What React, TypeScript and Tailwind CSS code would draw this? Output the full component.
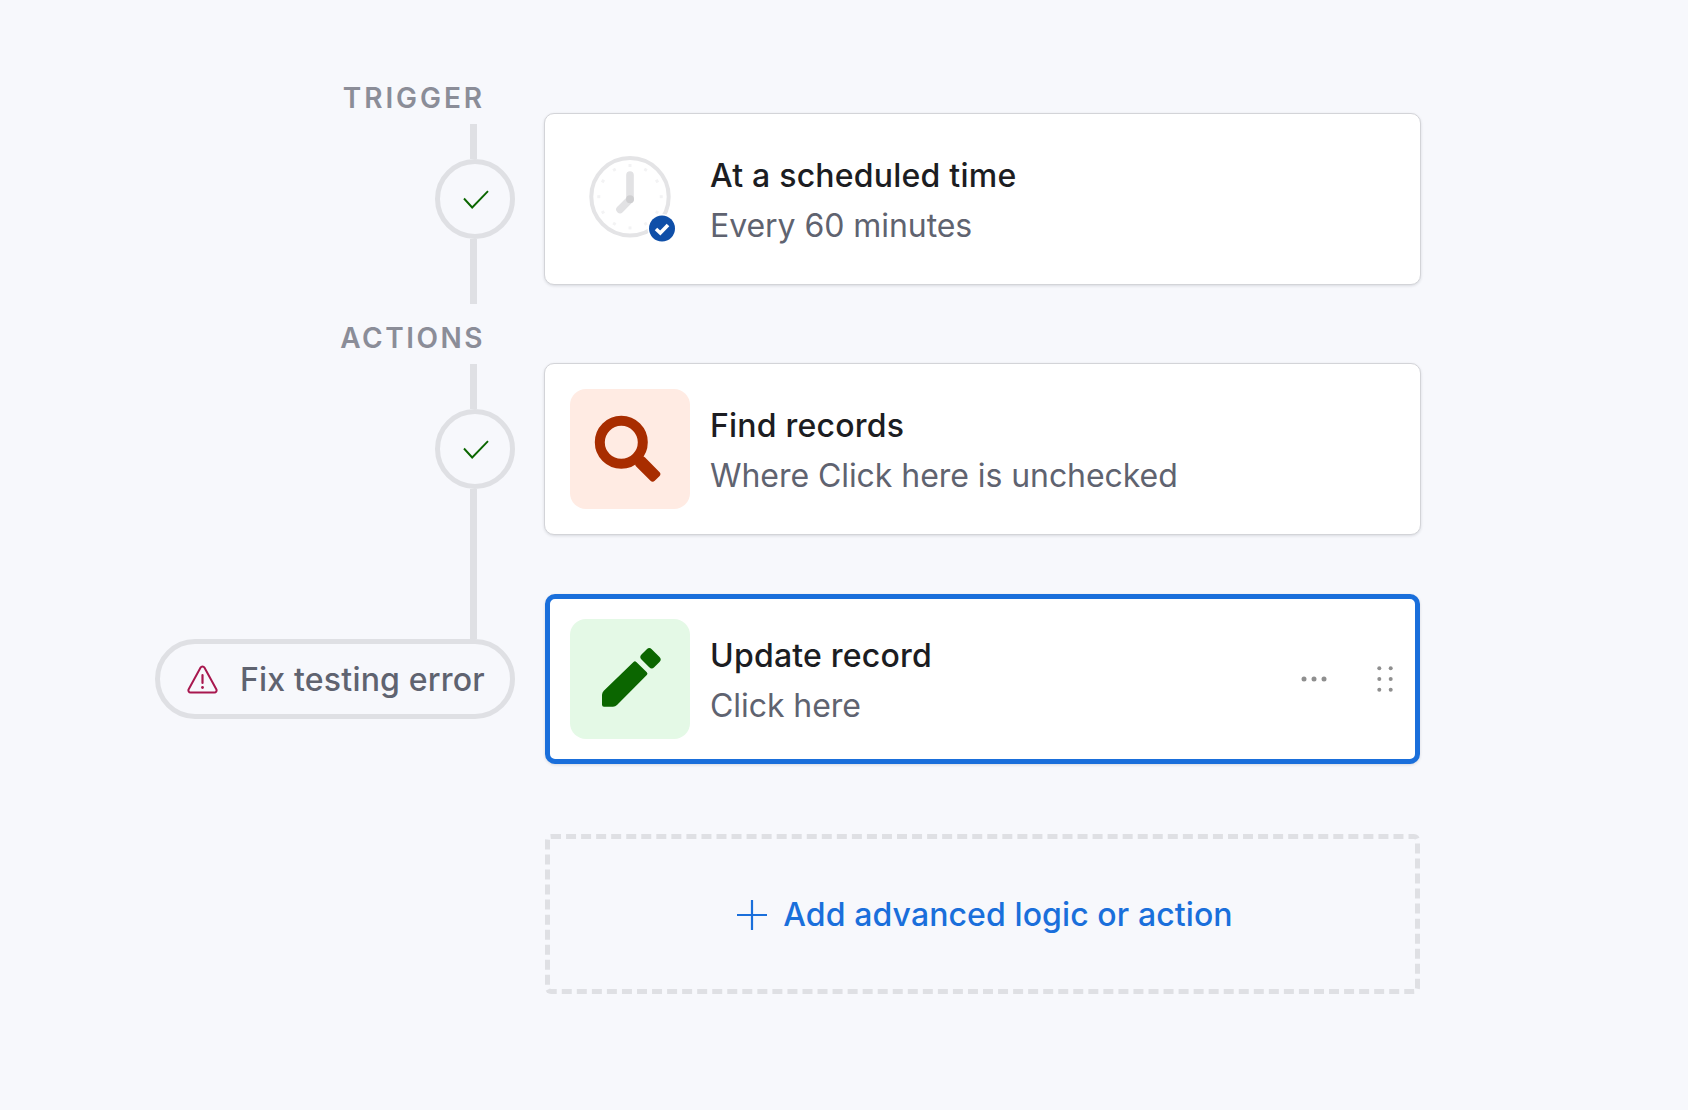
import React from "react";

function Stem({ h }: { h: string }) {
  return <div className={`w-[7px] mr-[38px] bg-[#dfe0e4] ${h}`} />;
}

function Check() {
  return (
    <svg width="26" height="20" viewBox="0 0 26 20" fill="none" className="ml-[2px] mt-[2px]">
      <path d="M1 8.5L9.2 17.5L25 1.2" stroke="#0b6600" strokeWidth="1.9" />
    </svg>
  );
}

function StepCircle() {
  return (
    <div className="w-[80px] h-[80px] shrink-0 rounded-full border-[5px] border-[#dfe0e4] flex items-center justify-center">
      <Check />
    </div>
  );
}

function Clock() {
  const ticks = Array.from({ length: 12 }, (_, i) => i * 30);
  return (
    <svg width="120" height="120" viewBox="0 0 120 120" fill="none" className="shrink-0">
      <circle cx="60" cy="57.7" r="38.7" stroke="#e4e4e6" strokeWidth="4" />
      {ticks.map((a) => (
        <line key={a} x1="60" y1="25" x2="60" y2="28" stroke="#f3f3f4" strokeWidth="3" transform={`rotate(${a} 60 57.7)`} />
      ))}
      <path d="M60 36V60.3L50 70.5" stroke="#e2e2e4" strokeWidth="7.6" strokeLinecap="round" strokeLinejoin="round" />
      <circle cx="60" cy="60.3" r="4" fill="#cfcfd1" />
      <circle cx="92" cy="89.5" r="14.5" fill="#ffffff" />
      <circle cx="92" cy="89.5" r="13" fill="#0f4fa8" />
      <path d="M86 90L90.3 94L98 86" stroke="#ffffff" strokeWidth="3.6" />
    </svg>
  );
}

function Magnifier() {
  return (
    <div className="w-[120px] h-[120px] rounded-[16px] bg-[#ffebe3] shrink-0">
      <svg width="120" height="120" viewBox="0 0 120 120" fill="none">
        <circle cx="51.3" cy="53.3" r="21.5" stroke="#a82d00" strokeWidth="10" />
        <rect x="64.7" y="73.9" width="26.2" height="12.6" rx="3" fill="#a82d00" transform="rotate(45 77.8 80.2)" />
      </svg>
    </div>
  );
}

function Pencil() {
  return (
    <div className="w-[120px] h-[120px] rounded-[16px] bg-[#e4f9e6] shrink-0">
      <svg width="120" height="120" viewBox="0 0 120 120" fill="#0b6600">
        <path d="M63.5 43a2 2 0 0 1 2.8 0l10.5 10.3a2 2 0 0 1 0 2.8L47 86a6 6 0 0 1-4 1.8h-9a2 2 0 0 1-2-2V76a6 6 0 0 1 1.8-4.2Z" />
        <rect x="71.5" y="32" width="18" height="14.5" rx="3.5" transform="rotate(45 80.5 39.25)" />
      </svg>
    </div>
  );
}

function CardText({ title, sub }: { title: string; sub: string }) {
  return (
    <div className="ml-[20px] min-w-0 pt-[4px]">
      <div className="text-[32px] leading-[50px] font-medium tracking-[0.22px] text-[#1c1d22] whitespace-nowrap">{title}</div>
      <div className="text-[32px] leading-[50px] tracking-[-0.06px] text-[#5f6370] whitespace-nowrap">{sub}</div>
    </div>
  );
}

function Card({ icon, title, sub, className }: { icon: React.ReactNode; title: string; sub: string; className: string }) {
  return (
    <div className={`h-[172px] -ml-[1px] bg-white border border-[#d3d4d8] rounded-[10px] shadow-[0_1px_3px_rgba(30,35,50,0.14)] pl-[25px] flex items-center ${className}`}>
      {icon}
      <CardText title={title} sub={sub} />
    </div>
  );
}

export default function App() {
  return (
    <div className="w-[1688px] h-[1110px] overflow-hidden bg-[#f7f8fc] font-['Inter',sans-serif] flex gap-[30px]">
      <div className="w-[515px] shrink-0 flex flex-col items-end">
        <div className="h-[124px] mr-[30px] pt-[79px] text-[28px] leading-[38px] font-semibold tracking-[0.105em] text-[#8b8d98] whitespace-nowrap">
          TRIGGER
        </div>
        <Stem h="h-[35px]" />
        <StepCircle />
        <Stem h="h-[65px]" />
        <div className="h-[60px] mr-[30px] pt-[15px] text-[28px] leading-[38px] font-semibold tracking-[0.09em] text-[#8b8d98] whitespace-nowrap">
          ACTIONS
        </div>
        <Stem h="h-[45px]" />
        <StepCircle />
        <Stem h="h-[150px]" />
        <div className="w-[360px] h-[80px] rounded-full border-[5px] border-[#dfe0e4] flex items-center pl-[27px]">
          <svg width="31" height="29" viewBox="0 0 31 29" fill="none" className="shrink-0">
            <path d="M13.6 2.6a2.2 2.2 0 0 1 3.8 0l11.9 21.6a2.2 2.2 0 0 1-1.9 3.3H3.6a2.2 2.2 0 0 1-1.9-3.3Z" stroke="#a8174e" strokeWidth="2" />
            <path d="M15.5 10V18" stroke="#a8174e" strokeWidth="2.2" strokeLinecap="round" />
            <circle cx="15.5" cy="22.5" r="1.4" fill="#a8174e" />
          </svg>
          <span className="ml-[22px] pt-[1px] text-[32px] leading-[50px] font-medium tracking-[0.2px] text-[#5f6370] whitespace-nowrap">Fix testing error</span>
        </div>
      </div>

      <div className="w-[876px] shrink-0 flex flex-col pt-[113px]">
        <Card icon={<Clock />} title="At a scheduled time" sub="Every 60 minutes" className="" />
        <Card icon={<Magnifier />} title="Find records" sub="Where Click here is unchecked" className="mt-[78px]" />
        <div className="mt-[59px] mr-[1px] h-[170px] bg-white border-[5px] border-[#1a6fdb] rounded-[10px] shadow-[0_1px_3px_rgba(30,35,50,0.14)] pl-[20px] pr-[22px] flex items-center">
          <Pencil />
          <CardText title="Update record" sub="Click here" />
          <svg width="26" height="6" viewBox="0 0 26 6" className="ml-auto shrink-0" fill="#8f8f8f">
            <circle cx="3" cy="3" r="2.5" />
            <circle cx="13" cy="3" r="2.5" />
            <circle cx="23" cy="3" r="2.5" />
          </svg>
          <svg width="16" height="26" viewBox="0 0 16 26" className="ml-[50px] shrink-0" fill="#8f8f8f">
            <circle cx="2.3" cy="2.3" r="2" />
            <circle cx="13.7" cy="2.3" r="2" />
            <circle cx="2.3" cy="13" r="2" />
            <circle cx="13.7" cy="13" r="2" />
            <circle cx="2.3" cy="23.7" r="2" />
            <circle cx="13.7" cy="23.7" r="2" />
          </svg>
        </div>
        <div className="mt-[70px] mr-[1px] h-[160px] border-[5px] border-dashed border-[#dfe0e4] rounded-[6px] flex items-center justify-center pl-[5px] pt-[2px]">
          <svg width="30" height="30" viewBox="0 0 30 30" fill="none" className="shrink-0">
            <path d="M15 0.5V29.5M0.5 15H29.5" stroke="#1a6fdb" strokeWidth="2.2" strokeLinecap="round" />
          </svg>
          <span className="ml-[16px] text-[32px] leading-[50px] font-medium tracking-[0.1px] text-[#1a6fdb] whitespace-nowrap">Add advanced logic or action</span>
        </div>
      </div>
    </div>
  );
}
